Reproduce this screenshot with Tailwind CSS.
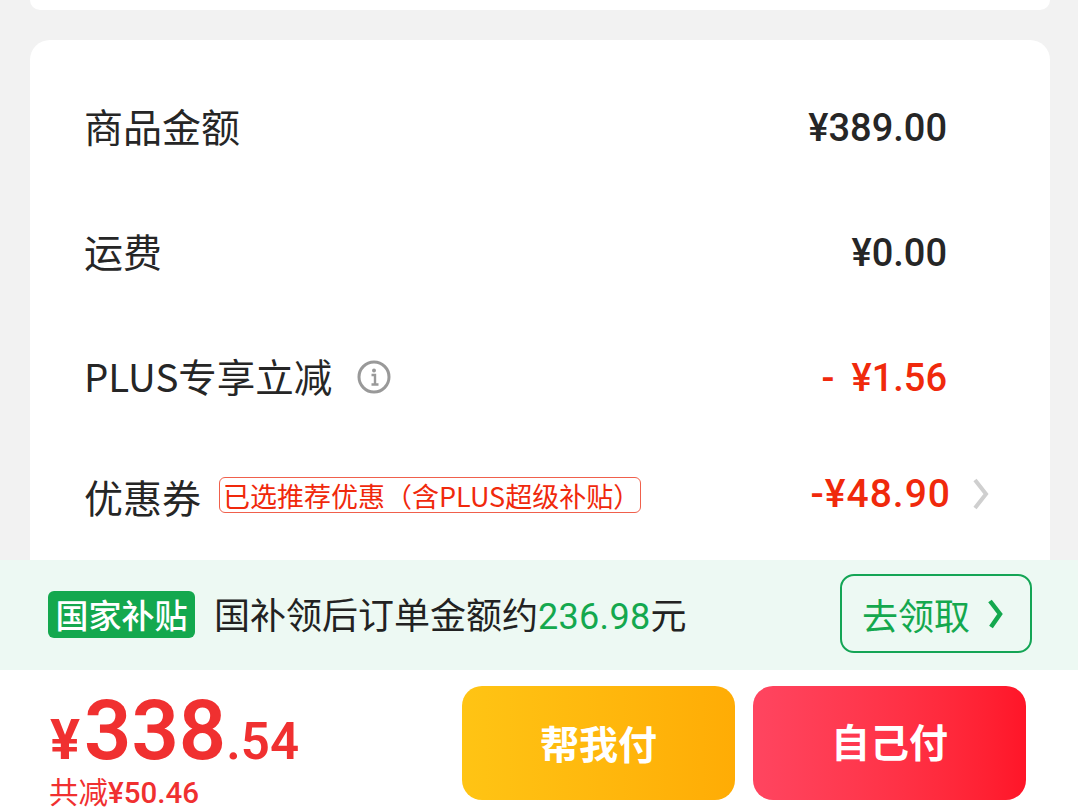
<!DOCTYPE html>
<html lang="zh-CN">
<head>
    <meta charset="UTF-8">
    <meta name="viewport" content="width=device-width, initial-scale=1.0">
    <title>确认订单</title>
    <script src="https://cdn.jsdelivr.net/npm/@tailwindcss/browser@4"></script>
</head>
<body class="bg-[#f2f2f2] font-['Roboto','Noto_Sans_CJK_SC',sans-serif]">
    <div class="w-[1078px] h-[811px] overflow-hidden flex flex-col">

        <!-- Price summary -->
        <div class="h-[560px] pl-[30px] pr-[28px] overflow-hidden shrink-0">
            <div class="h-[10px] bg-white rounded-b-[20px]"></div>
            <div class="mt-[30px] h-[520px] bg-white rounded-t-[20px] pt-[26px] pl-[54px] pr-[61px] text-[#262626]">
                <div class="h-[125px] flex items-center justify-between pr-[42px]">
                    <span class="-mt-[6px] font-['Noto_Sans_CJK_SC',sans-serif] text-[39px] leading-none">商品金额</span>
                    <span class="-mt-[2px] text-[38px] font-medium leading-none">¥389.00</span>
                </div>
                <div class="h-[125px] flex items-center justify-between pr-[42px]">
                    <span class="-mt-[6px] font-['Noto_Sans_CJK_SC',sans-serif] text-[39px] leading-none">运费</span>
                    <span class="-mt-[2px] text-[38px] font-medium leading-none">¥0.00</span>
                </div>
                <div class="h-[125px] flex items-center justify-between pr-[42px]">
                    <div class="flex items-center gap-[25px]">
                        <span class="-mt-[6px] font-['Noto_Sans_CJK_SC',sans-serif] text-[38.5px] leading-none">PLUS专享立减</span>
                        <svg class="w-[34px] h-[34px] -mt-[4px]" viewBox="0 0 34 34" fill="none">
                            <circle cx="17" cy="17" r="15" stroke="#999" stroke-width="3"/>
                            <circle cx="17" cy="10.5" r="2" fill="#999"/>
                            <path d="M14.5 15h3.5v9M14.5 24.5h7" stroke="#999" stroke-width="2.4"/>
                        </svg>
                    </div>
                    <span class="-mt-[2px] text-[38px] font-medium leading-none text-[#f0290c]"><span class="mr-[17px]">-</span>¥1.56</span>
                </div>
                <div class="h-[106px] flex items-center justify-between">
                    <div class="flex items-center gap-[18px]">
                        <span class="mt-[4px] font-['Noto_Sans_CJK_SC',sans-serif] text-[39px] leading-none">优惠券</span>
                        <span class="w-[422px] h-[36px] mt-[2px] pl-[3px] border border-[#f0604c] rounded-[6px] flex items-center font-['Noto_Sans_CJK_SC',sans-serif] text-[27px] leading-none text-[#f0290c] whitespace-nowrap">已选推荐优惠（含PLUS超级补贴）</span>
                    </div>
                    <div class="flex items-center gap-[22px]">
                        <span class="text-[39px] tracking-[1px] font-medium leading-none text-[#f0290c]">-¥48.90</span>
                        <svg class="w-[16px] h-[32px]" viewBox="0 0 16 32" fill="none">
                            <path d="M2 2 L13 16 L2 30" stroke="#cfcfcf" stroke-width="4"/>
                        </svg>
                    </div>
                </div>
            </div>
        </div>

        <!-- National subsidy bar -->
        <div class="h-[110px] shrink-0 bg-[#edf9f3] pl-[48px] pr-[46px] flex items-center justify-between">
            <div class="flex items-center gap-[19px]">
                <span class="w-[147px] h-[47px] mt-[-2px] bg-[#14a84e] rounded-[6px] flex items-center justify-center font-['Noto_Sans_CJK_SC',sans-serif] font-medium text-[33px] leading-none text-white whitespace-nowrap">国家补贴</span>
                <p class="font-['Noto_Sans_CJK_SC',sans-serif] text-[36px] leading-none text-[#222] whitespace-nowrap">国补领后订单金额约<span class="font-['Roboto',sans-serif] tracking-[0.3px] text-[#14a84e]">236.98</span>元</p>
            </div>
            <button class="w-[192px] h-[79px] -mt-[3px] border-2 border-[#14a555] rounded-[14px] flex items-center pl-[20px] gap-[18px] font-['Noto_Sans_CJK_SC',sans-serif] text-[36px] leading-none text-[#14a84e]">
                去领取
                <svg class="w-[16px] h-[30px]" viewBox="0 0 16 30" fill="none">
                    <path d="M2 2 L12 15 L3 28" stroke="#14a84e" stroke-width="4.5"/>
                </svg>
            </button>
        </div>

        <!-- Checkout footer -->
        <div class="flex-1 bg-white pl-[50px] pr-[52px] flex justify-between">
            <div class="pt-[19px] text-[#f03030]">
                <div class="flex items-baseline h-[89px] leading-none font-semibold">
                    <span class="text-[56px] mr-[4px] font-bold">¥</span>
                    <span class="text-[83px]">338</span>
                    <span class="text-[51px]">.54</span>
                </div>
                <div class="text-[29.5px] leading-none -mt-[2px] -ml-[1px] whitespace-nowrap font-medium"><span class="font-['Noto_Sans_CJK_SC',sans-serif] font-normal">共减</span>¥50.46</div>
            </div>
            <div class="flex gap-[18px] pt-[16px]">
                <button class="w-[273px] h-[114px] rounded-[20px] pb-[2px] bg-gradient-to-r from-[#ffc414] to-[#ffac05] font-['Noto_Sans_CJK_SC',sans-serif] text-[39px] font-bold text-white">帮我付</button>
                <button class="w-[273px] h-[114px] rounded-[20px] pb-[6px] bg-gradient-to-r from-[#ff4560] to-[#ff1528] font-['Noto_Sans_CJK_SC',sans-serif] text-[39px] font-bold text-white">自己付</button>
            </div>
        </div>
    </div>
</body>
</html>
